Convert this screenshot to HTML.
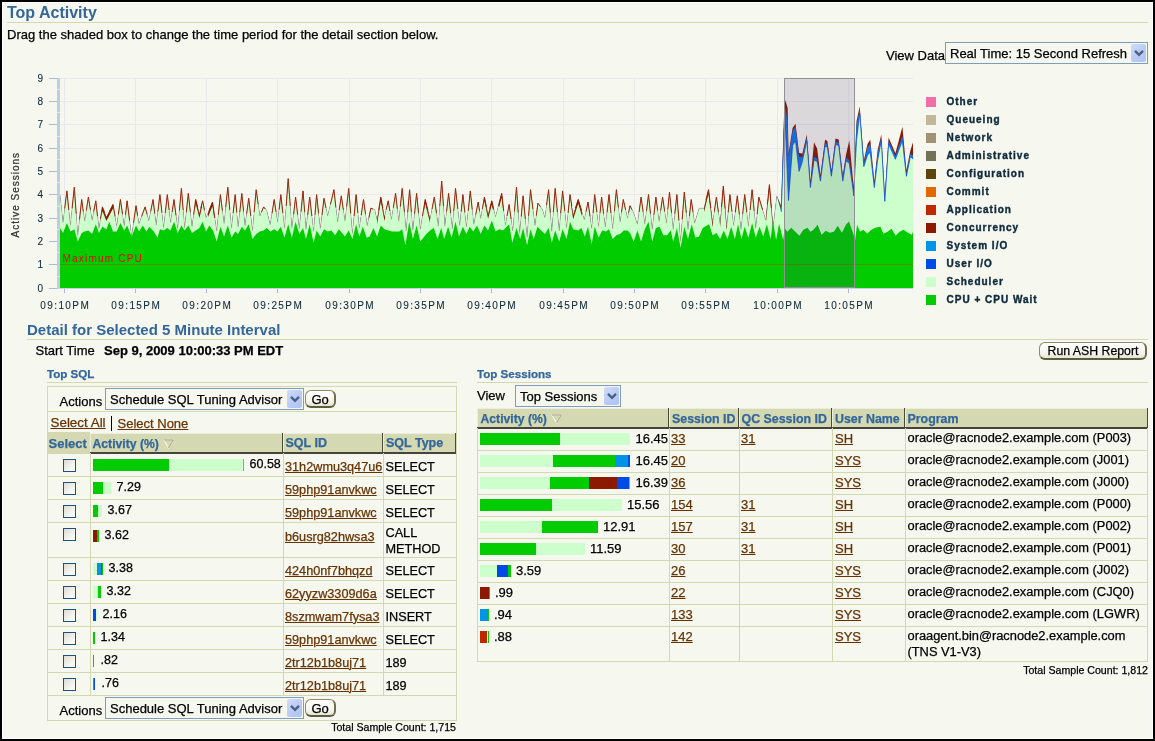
<!DOCTYPE html><html><head><meta charset="utf-8"><style>html,body{margin:0;padding:0;width:1155px;height:741px;overflow:hidden;background:#000}body{position:relative;font-family:"Liberation Sans",sans-serif;-webkit-font-smoothing:antialiased}div{-webkit-text-stroke:0.25px currentColor}div{box-sizing:content-box}a,u{color:#663300}</style></head><body>
<div style="position:absolute;left:0px;top:0px;width:1155px;height:741px;background:#000;"></div>
<div style="position:absolute;left:2px;top:2px;width:1151px;height:737px;background:#fff;"></div>
<div style="position:absolute;left:3px;top:3px;width:1149px;height:735px;background:#f6f7ef;"></div>
<div style="position:absolute;left:0;top:0;width:1155px;height:741px;will-change:transform">
<div style="position:absolute;left:7px;top:5.46px;font-size:16px;line-height:16px;font-weight:700;color:#336699;white-space:nowrap;-webkit-text-stroke:0;">Top Activity</div>
<div style="position:absolute;left:7px;top:22px;width:1141px;height:1px;background:#d2d9b1;"></div>
<div style="position:absolute;left:7px;top:28.00px;font-size:13px;line-height:13px;font-weight:400;color:#000;white-space:nowrap;">Drag the shaded box to change the time period for the detail section below.</div>
<div style="position:absolute;left:886px;top:49.00px;font-size:13px;line-height:13px;font-weight:400;color:#000;white-space:nowrap;">View Data</div>
<div style="position:absolute;left:945px;top:42px;width:201px;height:20px;border:1px solid #7f9db9;background:#f6f7ef"></div>
<div style="position:absolute;left:1131px;top:44px;width:15px;height:18px;border-radius:2px;background:linear-gradient(135deg,#d0dcf9 0%,#b7c9f6 60%,#aec4f6 100%)"></div>
<svg style="position:absolute;left:1133.5px;top:49.0px" width="10" height="8" viewBox="0 0 10 8"><path d="M1 1.8 L5 5.8 L9 1.8" fill="none" stroke="#4d6185" stroke-width="2.4"/></svg>
<div style="position:absolute;left:950px;top:47.00px;font-size:13px;line-height:13px;font-weight:400;color:#000;white-space:nowrap;">Real Time: 15 Second Refresh</div>
<svg style="position:absolute;left:0;top:0" width="1155" height="741" viewBox="0 0 1155 741"><line x1="60" y1="288.5" x2="913" y2="288.5" stroke="#e8eaea" stroke-width="1"/><line x1="49" y1="288.5" x2="57" y2="288.5" stroke="#a8bcd4" stroke-width="1"/><line x1="60" y1="264.5" x2="913" y2="264.5" stroke="#e8eaea" stroke-width="1"/><line x1="49" y1="264.5" x2="57" y2="264.5" stroke="#a8bcd4" stroke-width="1"/><line x1="60" y1="241.5" x2="913" y2="241.5" stroke="#e8eaea" stroke-width="1"/><line x1="49" y1="241.5" x2="57" y2="241.5" stroke="#a8bcd4" stroke-width="1"/><line x1="60" y1="218.5" x2="913" y2="218.5" stroke="#e8eaea" stroke-width="1"/><line x1="49" y1="218.5" x2="57" y2="218.5" stroke="#a8bcd4" stroke-width="1"/><line x1="60" y1="194.5" x2="913" y2="194.5" stroke="#e8eaea" stroke-width="1"/><line x1="49" y1="194.5" x2="57" y2="194.5" stroke="#a8bcd4" stroke-width="1"/><line x1="60" y1="171.5" x2="913" y2="171.5" stroke="#e8eaea" stroke-width="1"/><line x1="49" y1="171.5" x2="57" y2="171.5" stroke="#a8bcd4" stroke-width="1"/><line x1="60" y1="148.5" x2="913" y2="148.5" stroke="#e8eaea" stroke-width="1"/><line x1="49" y1="148.5" x2="57" y2="148.5" stroke="#a8bcd4" stroke-width="1"/><line x1="60" y1="124.5" x2="913" y2="124.5" stroke="#e8eaea" stroke-width="1"/><line x1="49" y1="124.5" x2="57" y2="124.5" stroke="#a8bcd4" stroke-width="1"/><line x1="60" y1="101.5" x2="913" y2="101.5" stroke="#e8eaea" stroke-width="1"/><line x1="49" y1="101.5" x2="57" y2="101.5" stroke="#a8bcd4" stroke-width="1"/><line x1="60" y1="78.5" x2="913" y2="78.5" stroke="#e8eaea" stroke-width="1"/><line x1="49" y1="78.5" x2="57" y2="78.5" stroke="#a8bcd4" stroke-width="1"/><line x1="64.5" y1="78" x2="64.5" y2="288" stroke="#e8eaea" stroke-width="1"/><line x1="64.5" y1="289" x2="64.5" y2="293" stroke="#a8bcd4" stroke-width="1"/><line x1="135.5" y1="78" x2="135.5" y2="288" stroke="#e8eaea" stroke-width="1"/><line x1="135.5" y1="289" x2="135.5" y2="293" stroke="#a8bcd4" stroke-width="1"/><line x1="206.5" y1="78" x2="206.5" y2="288" stroke="#e8eaea" stroke-width="1"/><line x1="206.5" y1="289" x2="206.5" y2="293" stroke="#a8bcd4" stroke-width="1"/><line x1="277.5" y1="78" x2="277.5" y2="288" stroke="#e8eaea" stroke-width="1"/><line x1="277.5" y1="289" x2="277.5" y2="293" stroke="#a8bcd4" stroke-width="1"/><line x1="349.5" y1="78" x2="349.5" y2="288" stroke="#e8eaea" stroke-width="1"/><line x1="349.5" y1="289" x2="349.5" y2="293" stroke="#a8bcd4" stroke-width="1"/><line x1="420.5" y1="78" x2="420.5" y2="288" stroke="#e8eaea" stroke-width="1"/><line x1="420.5" y1="289" x2="420.5" y2="293" stroke="#a8bcd4" stroke-width="1"/><line x1="491.5" y1="78" x2="491.5" y2="288" stroke="#e8eaea" stroke-width="1"/><line x1="491.5" y1="289" x2="491.5" y2="293" stroke="#a8bcd4" stroke-width="1"/><line x1="563.5" y1="78" x2="563.5" y2="288" stroke="#e8eaea" stroke-width="1"/><line x1="563.5" y1="289" x2="563.5" y2="293" stroke="#a8bcd4" stroke-width="1"/><line x1="634.5" y1="78" x2="634.5" y2="288" stroke="#e8eaea" stroke-width="1"/><line x1="634.5" y1="289" x2="634.5" y2="293" stroke="#a8bcd4" stroke-width="1"/><line x1="705.5" y1="78" x2="705.5" y2="288" stroke="#e8eaea" stroke-width="1"/><line x1="705.5" y1="289" x2="705.5" y2="293" stroke="#a8bcd4" stroke-width="1"/><line x1="777.5" y1="78" x2="777.5" y2="288" stroke="#e8eaea" stroke-width="1"/><line x1="777.5" y1="289" x2="777.5" y2="293" stroke="#a8bcd4" stroke-width="1"/><line x1="848.5" y1="78" x2="848.5" y2="288" stroke="#e8eaea" stroke-width="1"/><line x1="848.5" y1="289" x2="848.5" y2="293" stroke="#a8bcd4" stroke-width="1"/><polygon points="60,288 60.0,194.6 63.0,222.5 66.9,190.9 70.4,225.6 74.3,187.2 77.8,235.4 81.7,199.5 84.7,221.3 88.4,197.1 92.1,220.3 95.8,200.8 99.0,228.5 102.4,206.9 106.4,217.1 113.0,204.5 116.7,226.4 120.4,199.5 124.2,226.1 127.1,200.8 131.6,236.6 136.0,205.7 139.0,223.8 145.1,206.9 148.8,220.9 153.0,199.5 156.2,225.1 159.9,194.6 163.6,227.8 167.3,194.6 170.5,222.6 174.0,199.5 177.7,228.5 181.4,188.4 184.6,227.8 188.3,193.4 192.0,226.8 195.7,199.5 199.4,214.1 202.6,200.8 206.1,217.8 212.5,202.0 216.7,231.1 220.4,194.6 224.1,223.6 227.8,187.2 231.5,228.3 235.2,194.6 238.1,227.2 241.8,193.4 245.0,226.1 248.7,198.3 252.5,230.4 256.2,189.7 259.9,216.1 263.6,206.9 266.8,210.6 270.2,224.7 274.2,199.5 277.6,222.1 280.8,194.6 284.5,228.3 288.2,178.6 291.9,228.3 295.6,197.1 299.3,228.9 303.0,190.9 306.0,229.5 309.7,197.1 313.6,231.5 316.6,194.6 320.3,228.8 324.0,198.3 327.7,216.1 333.9,189.7 337.6,222.0 341.3,195.8 345.0,221.0 348.7,188.4 352.4,233.8 356.1,194.6 359.3,227.9 363.5,199.5 367.2,225.6 370.9,208.2 374.6,209.4 377.1,220.1 380.8,197.1 384.5,217.1 388.2,200.8 391.4,219.5 395.6,193.4 398.8,221.3 402.2,188.4 406.2,230.8 409.6,189.7 412.9,230.4 416.6,193.4 420.3,229.4 425.2,199.5 430.1,219.2 434.3,197.1 438.3,226.3 441.7,181.0 444.9,226.2 448.6,193.4 452.3,229.1 455.5,188.4 459.7,225.6 462.9,194.6 466.4,227.2 470.3,190.9 473.8,224.5 478.2,202.0 480.7,218.5 484.4,197.1 488.1,214.8 491.8,200.8 495.5,216.9 501.7,193.4 505.4,225.3 509.1,204.5 512.8,231.0 516.5,187.2 519.7,233.4 523.1,195.8 527.1,237.4 530.5,189.7 535.0,225.7 537.9,203.2 542.4,209.4 544.9,217.7 548.6,189.7 551.8,231.5 555.2,188.4 559.2,231.1 562.6,190.9 566.6,227.8 570.0,194.6 573.2,215.3 578.2,199.5 584.3,219.8 588.0,202.0 591.7,228.4 594.7,194.6 598.6,226.6 601.6,197.1 605.3,227.2 609.0,194.6 612.7,228.7 616.4,189.7 620.1,222.0 623.3,199.5 627.5,218.3 630.0,205.7 633.7,213.1 637.4,224.3 641.1,197.1 644.8,224.0 648.5,194.6 652.2,229.4 655.9,197.1 659.1,221.6 662.6,197.1 666.5,223.2 669.5,192.1 673.2,229.4 676.9,194.6 680.6,241.6 684.3,192.1 688.0,229.5 691.2,199.5 694.6,223.2 699.1,208.2 704.0,208.2 708.5,189.7 712.7,223.2 716.4,197.1 720.1,224.3 723.3,186.0 726.7,227.3 729.9,194.6 733.6,225.7 737.3,195.8 741.0,229.7 744.7,194.6 748.4,226.6 752.1,189.7 755.8,228.3 758.8,197.1 765.7,220.3 769.4,184.7 773.1,227.2 776.8,195.8 781.2,205.8 784.2,109.8 785.3,100.1 787.7,108.2 788.5,153.8 792.6,127.9 795.5,123.8 799.1,152.7 802.3,153.8 806.8,134.6 810.4,181.5 814.0,142.2 817.2,148.7 820.4,175.1 825.0,139.8 827.4,141.1 831.4,170.2 835.5,138.6 838.7,139.4 842.8,175.1 846.0,154.8 849.3,140.6 853.8,188.8 853.6,189.7 856.5,121.2 859.7,106.6 863.8,160.6 867.5,143.9 870.3,139.8 874.3,181.6 877.6,150.3 881.3,134.6 884.8,195.4 888.6,137.4 895.4,153.3 902.4,126.8 906.4,170.3 910.3,150.8 913.0,142.2 913.0,145.5 913,288" fill="#8b1a00"/><polygon points="60,288 60.0,194.6 63.0,222.5 66.9,190.9 70.4,225.6 74.3,187.2 77.8,235.4 81.7,199.5 84.7,221.3 88.4,197.1 92.1,220.3 95.8,200.8 99.0,228.5 102.4,206.9 106.4,217.1 113.0,204.5 116.7,226.4 120.4,199.5 124.2,226.1 127.1,200.8 131.6,236.6 136.0,205.7 139.0,223.8 145.1,206.9 148.8,220.9 153.0,199.5 156.2,225.1 159.9,194.6 163.6,227.8 167.3,194.6 170.5,222.6 174.0,199.5 177.7,228.5 181.4,188.4 184.6,227.8 188.3,193.4 192.0,226.8 195.7,199.5 199.4,214.1 202.6,200.8 206.1,217.8 212.5,202.0 216.7,231.1 220.4,194.6 224.1,223.6 227.8,187.2 231.5,228.3 235.2,194.6 238.1,227.2 241.8,193.4 245.0,226.1 248.7,198.3 252.5,230.4 256.2,189.7 259.9,216.1 263.6,206.9 266.8,210.6 270.2,224.7 274.2,199.5 277.6,222.1 280.8,194.6 284.5,228.3 288.2,178.6 291.9,228.3 295.6,197.1 299.3,228.9 303.0,190.9 306.0,229.5 309.7,197.1 313.6,231.5 316.6,194.6 320.3,228.8 324.0,198.3 327.7,216.1 333.9,189.7 337.6,222.0 341.3,195.8 345.0,221.0 348.7,188.4 352.4,233.8 356.1,194.6 359.3,227.9 363.5,199.5 367.2,225.6 370.9,208.2 374.6,209.4 377.1,220.1 380.8,197.1 384.5,217.1 388.2,200.8 391.4,219.5 395.6,193.4 398.8,221.3 402.2,188.4 406.2,230.8 409.6,189.7 412.9,230.4 416.6,193.4 420.3,229.4 425.2,199.5 430.1,219.2 434.3,197.1 438.3,226.3 441.7,181.0 444.9,226.2 448.6,193.4 452.3,229.1 455.5,188.4 459.7,225.6 462.9,194.6 466.4,227.2 470.3,190.9 473.8,224.5 478.2,202.0 480.7,218.5 484.4,197.1 488.1,214.8 491.8,200.8 495.5,216.9 501.7,193.4 505.4,225.3 509.1,204.5 512.8,231.0 516.5,187.2 519.7,233.4 523.1,195.8 527.1,237.4 530.5,189.7 535.0,225.7 537.9,203.2 542.4,209.4 544.9,217.7 548.6,189.7 551.8,231.5 555.2,188.4 559.2,231.1 562.6,190.9 566.6,227.8 570.0,194.6 573.2,215.3 578.2,199.5 584.3,219.8 588.0,202.0 591.7,228.4 594.7,194.6 598.6,226.6 601.6,197.1 605.3,227.2 609.0,194.6 612.7,228.7 616.4,189.7 620.1,222.0 623.3,199.5 627.5,218.3 630.0,205.7 633.7,213.1 637.4,224.3 641.1,197.1 644.8,224.0 648.5,194.6 652.2,229.4 655.9,197.1 659.1,221.6 662.6,197.1 666.5,223.2 669.5,192.1 673.2,229.4 676.9,194.6 680.6,241.6 684.3,192.1 688.0,229.5 691.2,199.5 694.6,223.2 699.1,208.2 704.0,208.2 708.5,189.7 712.7,223.2 716.4,197.1 720.1,224.3 723.3,186.0 726.7,227.3 729.9,194.6 733.6,225.7 737.3,195.8 741.0,229.7 744.7,194.6 748.4,226.6 752.1,189.7 755.8,228.3 758.8,197.1 765.7,220.3 769.4,184.7 773.1,227.2 776.8,195.8 781.2,208.8 784.2,113.1 785.3,108.2 787.7,121.1 788.5,156.8 792.6,130.9 795.5,126.8 799.1,156.8 802.3,156.8 806.8,137.6 810.4,184.5 814.0,157.0 817.2,158.6 820.4,178.1 825.0,143.3 827.4,144.1 831.4,173.2 835.5,141.6 838.7,142.4 842.8,178.1 846.0,157.8 849.3,160.0 853.8,191.8 853.6,192.7 856.5,124.4 859.7,109.8 863.8,163.6 867.5,147.1 870.3,143.9 874.3,184.6 877.6,153.6 881.3,137.6 884.8,198.4 888.6,140.6 895.4,156.3 902.4,135.8 906.4,173.3 910.3,153.8 913.0,155.5 913.0,156.3 913,288" fill="#1478e6"/><polygon points="60,288 60.0,194.6 63.0,222.5 66.9,190.9 70.4,225.6 74.3,187.2 77.8,235.4 81.7,199.5 84.7,221.3 88.4,197.1 92.1,220.3 95.8,200.8 99.0,228.5 102.4,206.9 106.4,217.1 113.0,204.5 116.7,226.4 120.4,199.5 124.2,226.1 127.1,200.8 131.6,236.6 136.0,205.7 139.0,223.8 145.1,206.9 148.8,220.9 153.0,199.5 156.2,225.1 159.9,194.6 163.6,227.8 167.3,194.6 170.5,222.6 174.0,199.5 177.7,228.5 181.4,188.4 184.6,227.8 188.3,193.4 192.0,226.8 195.7,199.5 199.4,214.1 202.6,200.8 206.1,217.8 212.5,202.0 216.7,231.1 220.4,194.6 224.1,223.6 227.8,187.2 231.5,228.3 235.2,194.6 238.1,227.2 241.8,193.4 245.0,226.1 248.7,198.3 252.5,230.4 256.2,189.7 259.9,216.1 263.6,206.9 266.8,210.6 270.2,224.7 274.2,199.5 277.6,222.1 280.8,194.6 284.5,228.3 288.2,178.6 291.9,228.3 295.6,197.1 299.3,228.9 303.0,190.9 306.0,229.5 309.7,197.1 313.6,231.5 316.6,194.6 320.3,228.8 324.0,198.3 327.7,216.1 333.9,189.7 337.6,222.0 341.3,195.8 345.0,221.0 348.7,188.4 352.4,233.8 356.1,194.6 359.3,227.9 363.5,199.5 367.2,225.6 370.9,208.2 374.6,209.4 377.1,220.1 380.8,197.1 384.5,217.1 388.2,200.8 391.4,219.5 395.6,193.4 398.8,221.3 402.2,188.4 406.2,230.8 409.6,189.7 412.9,230.4 416.6,193.4 420.3,229.4 425.2,199.5 430.1,219.2 434.3,197.1 438.3,226.3 441.7,181.0 444.9,226.2 448.6,193.4 452.3,229.1 455.5,188.4 459.7,225.6 462.9,194.6 466.4,227.2 470.3,190.9 473.8,224.5 478.2,202.0 480.7,218.5 484.4,197.1 488.1,214.8 491.8,200.8 495.5,216.9 501.7,193.4 505.4,225.3 509.1,204.5 512.8,231.0 516.5,187.2 519.7,233.4 523.1,195.8 527.1,237.4 530.5,189.7 535.0,225.7 537.9,203.2 542.4,209.4 544.9,217.7 548.6,189.7 551.8,231.5 555.2,188.4 559.2,231.1 562.6,190.9 566.6,227.8 570.0,194.6 573.2,215.3 578.2,199.5 584.3,219.8 588.0,202.0 591.7,228.4 594.7,194.6 598.6,226.6 601.6,197.1 605.3,227.2 609.0,194.6 612.7,228.7 616.4,189.7 620.1,222.0 623.3,199.5 627.5,218.3 630.0,205.7 633.7,213.1 637.4,224.3 641.1,197.1 644.8,224.0 648.5,194.6 652.2,229.4 655.9,197.1 659.1,221.6 662.6,197.1 666.5,223.2 669.5,192.1 673.2,229.4 676.9,194.6 680.6,241.6 684.3,192.1 688.0,229.5 691.2,199.5 694.6,223.2 699.1,208.2 704.0,208.2 708.5,189.7 712.7,223.2 716.4,197.1 720.1,224.3 723.3,186.0 726.7,227.3 729.9,194.6 733.6,225.7 737.3,195.8 741.0,229.7 744.7,194.6 748.4,226.6 752.1,189.7 755.8,228.3 758.8,197.1 765.7,220.3 769.4,184.7 773.1,227.2 776.8,195.8 781.2,211.8 784.2,129.2 785.3,124.4 787.7,182.7 788.5,200.5 792.6,145.4 795.5,140.6 799.1,171.4 802.3,161.6 806.8,140.6 810.4,187.5 814.0,160.0 817.2,161.6 820.4,181.1 825.0,146.3 827.4,147.1 831.4,176.2 835.5,144.6 838.7,145.4 842.8,181.1 846.0,160.8 849.3,163.3 853.8,194.8 853.6,195.7 856.5,140.6 859.7,113.1 863.8,166.6 867.5,155.2 870.3,152.0 874.3,187.6 877.6,160.1 881.3,140.6 884.8,201.4 888.6,143.9 895.4,159.3 902.4,140.6 906.4,176.3 910.3,156.8 913.0,158.5 913.0,159.3 913,288" fill="#ccffcc"/><polyline points="781.2,211.8 784.2,129.2 785.3,124.4 787.7,182.7 788.5,200.5 792.6,145.4 795.5,140.6 799.1,171.4 802.3,161.6 806.8,140.6 810.4,187.5 814.0,160.0 817.2,161.6 820.4,181.1 825.0,146.3 827.4,147.1 831.4,176.2 835.5,144.6 838.7,145.4 842.8,181.1 846.0,160.8 849.3,163.3 853.8,194.8 853.6,195.7 856.5,140.6 859.7,113.1 863.8,166.6 867.5,155.2 870.3,152.0 874.3,187.6 877.6,160.1 881.3,140.6 884.8,201.4 888.6,143.9 895.4,159.3 902.4,140.6 906.4,176.3 910.3,156.8 913.0,158.5 913.0,159.3" fill="none" stroke="rgba(10,70,225,0.8)" stroke-width="0.9" stroke-linejoin="miter"/><polyline points="60.0,194.6 63.0,222.5 66.9,190.9 70.4,225.6 74.3,187.2 77.8,235.4 81.7,199.5 84.7,221.3 88.4,197.1 92.1,220.3 95.8,200.8 99.0,228.5 102.4,206.9 106.4,217.1 113.0,204.5 116.7,226.4 120.4,199.5 124.2,226.1 127.1,200.8 131.6,236.6 136.0,205.7 139.0,223.8 145.1,206.9 148.8,220.9 153.0,199.5 156.2,225.1 159.9,194.6 163.6,227.8 167.3,194.6 170.5,222.6 174.0,199.5 177.7,228.5 181.4,188.4 184.6,227.8 188.3,193.4 192.0,226.8 195.7,199.5 199.4,214.1 202.6,200.8 206.1,217.8 212.5,202.0 216.7,231.1 220.4,194.6 224.1,223.6 227.8,187.2 231.5,228.3 235.2,194.6 238.1,227.2 241.8,193.4 245.0,226.1 248.7,198.3 252.5,230.4 256.2,189.7 259.9,216.1 263.6,206.9 266.8,210.6 270.2,224.7 274.2,199.5 277.6,222.1 280.8,194.6 284.5,228.3 288.2,178.6 291.9,228.3 295.6,197.1 299.3,228.9 303.0,190.9 306.0,229.5 309.7,197.1 313.6,231.5 316.6,194.6 320.3,228.8 324.0,198.3 327.7,216.1 333.9,189.7 337.6,222.0 341.3,195.8 345.0,221.0 348.7,188.4 352.4,233.8 356.1,194.6 359.3,227.9 363.5,199.5 367.2,225.6 370.9,208.2 374.6,209.4 377.1,220.1 380.8,197.1 384.5,217.1 388.2,200.8 391.4,219.5 395.6,193.4 398.8,221.3 402.2,188.4 406.2,230.8 409.6,189.7 412.9,230.4 416.6,193.4 420.3,229.4 425.2,199.5 430.1,219.2 434.3,197.1 438.3,226.3 441.7,181.0 444.9,226.2 448.6,193.4 452.3,229.1 455.5,188.4 459.7,225.6 462.9,194.6 466.4,227.2 470.3,190.9 473.8,224.5 478.2,202.0 480.7,218.5 484.4,197.1 488.1,214.8 491.8,200.8 495.5,216.9 501.7,193.4 505.4,225.3 509.1,204.5 512.8,231.0 516.5,187.2 519.7,233.4 523.1,195.8 527.1,237.4 530.5,189.7 535.0,225.7 537.9,203.2 542.4,209.4 544.9,217.7 548.6,189.7 551.8,231.5 555.2,188.4 559.2,231.1 562.6,190.9 566.6,227.8 570.0,194.6 573.2,215.3 578.2,199.5 584.3,219.8 588.0,202.0 591.7,228.4 594.7,194.6 598.6,226.6 601.6,197.1 605.3,227.2 609.0,194.6 612.7,228.7 616.4,189.7 620.1,222.0 623.3,199.5 627.5,218.3 630.0,205.7 633.7,213.1 637.4,224.3 641.1,197.1 644.8,224.0 648.5,194.6 652.2,229.4 655.9,197.1 659.1,221.6 662.6,197.1 666.5,223.2 669.5,192.1 673.2,229.4 676.9,194.6 680.6,241.6 684.3,192.1 688.0,229.5 691.2,199.5 694.6,223.2 699.1,208.2 704.0,208.2 708.5,189.7 712.7,223.2 716.4,197.1 720.1,224.3 723.3,186.0 726.7,227.3 729.9,194.6 733.6,225.7 737.3,195.8 741.0,229.7 744.7,194.6 748.4,226.6 752.1,189.7 755.8,228.3 758.8,197.1 765.7,220.3 769.4,184.7 773.1,227.2 776.8,195.8" fill="none" stroke="rgba(170,60,40,0.35)" stroke-width="0.6" stroke-linejoin="miter"/><polyline points="64.7,208.3 66.9,190.9 68.8,210.0" fill="none" stroke="#9a2a0e" stroke-width="1.0" stroke-linejoin="miter"/><polyline points="72.1,208.3 74.3,187.2 76.2,213.7" fill="none" stroke="#9a2a0e" stroke-width="1.0" stroke-linejoin="miter"/><polyline points="79.5,219.3 81.7,199.5 83.3,211.5" fill="none" stroke="#9a2a0e" stroke-width="1.0" stroke-linejoin="miter"/><polyline points="86.3,210.4 88.4,197.1 90.4,209.8" fill="none" stroke="#9a2a0e" stroke-width="1.0" stroke-linejoin="miter"/><polyline points="93.7,211.5 95.8,200.8 97.5,216.0" fill="none" stroke="#9a2a0e" stroke-width="1.0" stroke-linejoin="miter"/><polyline points="100.5,218.8 102.4,206.9 104.6,212.5" fill="none" stroke="#9a2a0e" stroke-width="1.0" stroke-linejoin="miter"/><polyline points="109.4,211.4 113.0,204.5 115.1,216.6" fill="none" stroke="#9a2a0e" stroke-width="1.0" stroke-linejoin="miter"/><polyline points="118.4,214.3 120.4,199.5 122.5,214.1" fill="none" stroke="#9a2a0e" stroke-width="1.0" stroke-linejoin="miter"/><polyline points="125.5,214.7 127.1,200.8 129.6,220.5" fill="none" stroke="#9a2a0e" stroke-width="1.0" stroke-linejoin="miter"/><polyline points="133.6,222.7 136.0,205.7 137.6,215.7" fill="none" stroke="#9a2a0e" stroke-width="1.0" stroke-linejoin="miter"/><polyline points="141.7,216.2 145.1,206.9 147.2,214.6" fill="none" stroke="#9a2a0e" stroke-width="1.0" stroke-linejoin="miter"/><polyline points="150.7,211.3 153.0,199.5 154.8,213.6" fill="none" stroke="#9a2a0e" stroke-width="1.0" stroke-linejoin="miter"/><polyline points="157.9,211.4 159.9,194.6 162.0,212.9" fill="none" stroke="#9a2a0e" stroke-width="1.0" stroke-linejoin="miter"/><polyline points="165.3,212.9 167.3,194.6 169.1,210.0" fill="none" stroke="#9a2a0e" stroke-width="1.0" stroke-linejoin="miter"/><polyline points="172.1,212.2 174.0,199.5 176.0,215.5" fill="none" stroke="#9a2a0e" stroke-width="1.0" stroke-linejoin="miter"/><polyline points="179.4,210.5 181.4,188.4 183.2,210.1" fill="none" stroke="#9a2a0e" stroke-width="1.0" stroke-linejoin="miter"/><polyline points="186.3,212.3 188.3,193.4 190.3,211.8" fill="none" stroke="#9a2a0e" stroke-width="1.0" stroke-linejoin="miter"/><polyline points="193.7,214.5 195.7,199.5 197.7,207.5" fill="none" stroke="#9a2a0e" stroke-width="1.0" stroke-linejoin="miter"/><polyline points="200.8,208.1 202.6,200.8 204.5,210.1" fill="none" stroke="#9a2a0e" stroke-width="1.0" stroke-linejoin="miter"/><polyline points="209.0,210.7 212.5,202.0 214.8,218.0" fill="none" stroke="#9a2a0e" stroke-width="1.0" stroke-linejoin="miter"/><polyline points="218.3,214.7 220.4,194.6 222.4,210.6" fill="none" stroke="#9a2a0e" stroke-width="1.0" stroke-linejoin="miter"/><polyline points="225.7,207.2 227.8,187.2 229.8,209.8" fill="none" stroke="#9a2a0e" stroke-width="1.0" stroke-linejoin="miter"/><polyline points="233.1,213.1 235.2,194.6 236.8,212.5" fill="none" stroke="#9a2a0e" stroke-width="1.0" stroke-linejoin="miter"/><polyline points="239.8,212.0 241.8,193.4 243.6,211.4" fill="none" stroke="#9a2a0e" stroke-width="1.0" stroke-linejoin="miter"/><polyline points="246.7,213.6 248.7,198.3 250.8,215.9" fill="none" stroke="#9a2a0e" stroke-width="1.0" stroke-linejoin="miter"/><polyline points="254.1,212.1 256.2,189.7 258.2,204.2" fill="none" stroke="#9a2a0e" stroke-width="1.0" stroke-linejoin="miter"/><polyline points="261.5,212.0 263.6,206.9 265.3,209.0" fill="none" stroke="#9a2a0e" stroke-width="1.0" stroke-linejoin="miter"/><polyline points="272.0,213.4 274.2,199.5 276.1,212.0" fill="none" stroke="#9a2a0e" stroke-width="1.0" stroke-linejoin="miter"/><polyline points="279.1,209.7 280.8,194.6 282.9,213.1" fill="none" stroke="#9a2a0e" stroke-width="1.0" stroke-linejoin="miter"/><polyline points="286.2,205.9 288.2,178.6 290.3,205.9" fill="none" stroke="#9a2a0e" stroke-width="1.0" stroke-linejoin="miter"/><polyline points="293.6,214.2 295.6,197.1 297.7,214.6" fill="none" stroke="#9a2a0e" stroke-width="1.0" stroke-linejoin="miter"/><polyline points="301.0,211.8 303.0,190.9 304.7,212.1" fill="none" stroke="#9a2a0e" stroke-width="1.0" stroke-linejoin="miter"/><polyline points="307.7,214.9 309.7,197.1 311.9,216.0" fill="none" stroke="#9a2a0e" stroke-width="1.0" stroke-linejoin="miter"/><polyline points="315.0,214.9 316.6,194.6 318.6,213.4" fill="none" stroke="#9a2a0e" stroke-width="1.0" stroke-linejoin="miter"/><polyline points="322.0,215.1 324.0,198.3 326.0,208.1" fill="none" stroke="#9a2a0e" stroke-width="1.0" stroke-linejoin="miter"/><polyline points="330.5,204.2 333.9,189.7 335.9,207.5" fill="none" stroke="#9a2a0e" stroke-width="1.0" stroke-linejoin="miter"/><polyline points="339.2,210.2 341.3,195.8 343.3,209.7" fill="none" stroke="#9a2a0e" stroke-width="1.0" stroke-linejoin="miter"/><polyline points="346.7,206.4 348.7,188.4 350.7,213.4" fill="none" stroke="#9a2a0e" stroke-width="1.0" stroke-linejoin="miter"/><polyline points="354.1,216.2 356.1,194.6 357.9,212.9" fill="none" stroke="#9a2a0e" stroke-width="1.0" stroke-linejoin="miter"/><polyline points="361.2,215.1 363.5,199.5 365.5,213.9" fill="none" stroke="#9a2a0e" stroke-width="1.0" stroke-linejoin="miter"/><polyline points="368.9,217.8 370.9,208.2 372.9,208.9" fill="none" stroke="#9a2a0e" stroke-width="1.0" stroke-linejoin="miter"/><polyline points="378.7,209.8 380.8,197.1 382.8,208.1" fill="none" stroke="#9a2a0e" stroke-width="1.0" stroke-linejoin="miter"/><polyline points="386.1,209.7 388.2,200.8 389.9,211.1" fill="none" stroke="#9a2a0e" stroke-width="1.0" stroke-linejoin="miter"/><polyline points="393.3,207.7 395.6,193.4 397.3,208.7" fill="none" stroke="#9a2a0e" stroke-width="1.0" stroke-linejoin="miter"/><polyline points="400.3,206.5 402.2,188.4 404.4,211.8" fill="none" stroke="#9a2a0e" stroke-width="1.0" stroke-linejoin="miter"/><polyline points="407.7,212.3 409.6,189.7 411.4,212.1" fill="none" stroke="#9a2a0e" stroke-width="1.0" stroke-linejoin="miter"/><polyline points="414.5,213.7 416.6,193.4 418.6,213.2" fill="none" stroke="#9a2a0e" stroke-width="1.0" stroke-linejoin="miter"/><polyline points="422.5,216.0 425.2,199.5 427.9,210.3" fill="none" stroke="#9a2a0e" stroke-width="1.0" stroke-linejoin="miter"/><polyline points="432.0,209.2 434.3,197.1 436.5,213.1" fill="none" stroke="#9a2a0e" stroke-width="1.0" stroke-linejoin="miter"/><polyline points="439.8,205.9 441.7,181.0 443.5,205.9" fill="none" stroke="#9a2a0e" stroke-width="1.0" stroke-linejoin="miter"/><polyline points="446.6,211.4 448.6,193.4 450.7,213.0" fill="none" stroke="#9a2a0e" stroke-width="1.0" stroke-linejoin="miter"/><polyline points="453.8,210.8 455.5,188.4 457.8,208.9" fill="none" stroke="#9a2a0e" stroke-width="1.0" stroke-linejoin="miter"/><polyline points="461.2,211.7 462.9,194.6 464.8,212.5" fill="none" stroke="#9a2a0e" stroke-width="1.0" stroke-linejoin="miter"/><polyline points="468.2,210.9 470.3,190.9 472.2,209.4" fill="none" stroke="#9a2a0e" stroke-width="1.0" stroke-linejoin="miter"/><polyline points="475.8,214.4 478.2,202.0 479.6,211.1" fill="none" stroke="#9a2a0e" stroke-width="1.0" stroke-linejoin="miter"/><polyline points="482.4,208.9 484.4,197.1 486.4,206.8" fill="none" stroke="#9a2a0e" stroke-width="1.0" stroke-linejoin="miter"/><polyline points="489.8,208.5 491.8,200.8 493.8,209.7" fill="none" stroke="#9a2a0e" stroke-width="1.0" stroke-linejoin="miter"/><polyline points="498.3,206.3 501.7,193.4 503.7,210.9" fill="none" stroke="#9a2a0e" stroke-width="1.0" stroke-linejoin="miter"/><polyline points="507.0,215.9 509.1,204.5 511.1,219.0" fill="none" stroke="#9a2a0e" stroke-width="1.0" stroke-linejoin="miter"/><polyline points="514.4,211.3 516.5,187.2 518.2,212.6" fill="none" stroke="#9a2a0e" stroke-width="1.0" stroke-linejoin="miter"/><polyline points="521.2,216.5 523.1,195.8 525.3,218.7" fill="none" stroke="#9a2a0e" stroke-width="1.0" stroke-linejoin="miter"/><polyline points="528.6,215.9 530.5,189.7 533.0,209.5" fill="none" stroke="#9a2a0e" stroke-width="1.0" stroke-linejoin="miter"/><polyline points="536.3,215.6 537.9,203.2 540.4,206.6" fill="none" stroke="#9a2a0e" stroke-width="1.0" stroke-linejoin="miter"/><polyline points="546.5,205.1 548.6,189.7 550.3,212.7" fill="none" stroke="#9a2a0e" stroke-width="1.0" stroke-linejoin="miter"/><polyline points="553.3,212.1 555.2,188.4 557.4,211.9" fill="none" stroke="#9a2a0e" stroke-width="1.0" stroke-linejoin="miter"/><polyline points="560.7,213.0 562.6,190.9 564.8,211.2" fill="none" stroke="#9a2a0e" stroke-width="1.0" stroke-linejoin="miter"/><polyline points="568.1,212.9 570.0,194.6 571.8,206.0" fill="none" stroke="#9a2a0e" stroke-width="1.0" stroke-linejoin="miter"/><polyline points="575.4,208.2 578.2,199.5 581.6,210.7" fill="none" stroke="#9a2a0e" stroke-width="1.0" stroke-linejoin="miter"/><polyline points="586.0,211.8 588.0,202.0 590.1,216.5" fill="none" stroke="#9a2a0e" stroke-width="1.0" stroke-linejoin="miter"/><polyline points="593.1,213.2 594.7,194.6 596.9,212.2" fill="none" stroke="#9a2a0e" stroke-width="1.0" stroke-linejoin="miter"/><polyline points="600.0,213.3 601.6,197.1 603.6,213.7" fill="none" stroke="#9a2a0e" stroke-width="1.0" stroke-linejoin="miter"/><polyline points="607.0,212.6 609.0,194.6 611.0,213.3" fill="none" stroke="#9a2a0e" stroke-width="1.0" stroke-linejoin="miter"/><polyline points="614.4,211.1 616.4,189.7 618.4,207.5" fill="none" stroke="#9a2a0e" stroke-width="1.0" stroke-linejoin="miter"/><polyline points="621.5,211.9 623.3,199.5 625.6,209.9" fill="none" stroke="#9a2a0e" stroke-width="1.0" stroke-linejoin="miter"/><polyline points="628.6,212.6 630.0,205.7 632.0,209.8" fill="none" stroke="#9a2a0e" stroke-width="1.0" stroke-linejoin="miter"/><polyline points="639.1,212.1 641.1,197.1 643.1,211.9" fill="none" stroke="#9a2a0e" stroke-width="1.0" stroke-linejoin="miter"/><polyline points="646.5,210.8 648.5,194.6 650.5,213.7" fill="none" stroke="#9a2a0e" stroke-width="1.0" stroke-linejoin="miter"/><polyline points="653.9,214.9 655.9,197.1 657.7,210.5" fill="none" stroke="#9a2a0e" stroke-width="1.0" stroke-linejoin="miter"/><polyline points="660.7,210.5 662.6,197.1 664.7,211.5" fill="none" stroke="#9a2a0e" stroke-width="1.0" stroke-linejoin="miter"/><polyline points="667.8,209.2 669.5,192.1 671.5,212.6" fill="none" stroke="#9a2a0e" stroke-width="1.0" stroke-linejoin="miter"/><polyline points="674.8,213.7 676.9,194.6 678.9,220.5" fill="none" stroke="#9a2a0e" stroke-width="1.0" stroke-linejoin="miter"/><polyline points="682.2,219.3 684.3,192.1 686.3,212.7" fill="none" stroke="#9a2a0e" stroke-width="1.0" stroke-linejoin="miter"/><polyline points="689.4,216.0 691.2,199.5 693.1,212.5" fill="none" stroke="#9a2a0e" stroke-width="1.0" stroke-linejoin="miter"/><polyline points="706.0,199.9 708.5,189.7 710.8,208.1" fill="none" stroke="#9a2a0e" stroke-width="1.0" stroke-linejoin="miter"/><polyline points="714.3,211.5 716.4,197.1 718.4,212.1" fill="none" stroke="#9a2a0e" stroke-width="1.0" stroke-linejoin="miter"/><polyline points="721.5,207.1 723.3,186.0 725.2,208.7" fill="none" stroke="#9a2a0e" stroke-width="1.0" stroke-linejoin="miter"/><polyline points="728.2,212.6 729.9,194.6 732.0,211.7" fill="none" stroke="#9a2a0e" stroke-width="1.0" stroke-linejoin="miter"/><polyline points="735.3,212.3 737.3,195.8 739.4,214.5" fill="none" stroke="#9a2a0e" stroke-width="1.0" stroke-linejoin="miter"/><polyline points="742.7,213.9 744.7,194.6 746.8,212.2" fill="none" stroke="#9a2a0e" stroke-width="1.0" stroke-linejoin="miter"/><polyline points="750.1,210.0 752.1,189.7 754.2,210.9" fill="none" stroke="#9a2a0e" stroke-width="1.0" stroke-linejoin="miter"/><polyline points="757.2,214.2 758.8,197.1 762.6,209.8" fill="none" stroke="#9a2a0e" stroke-width="1.0" stroke-linejoin="miter"/><polyline points="767.4,204.3 769.4,184.7 771.4,208.1" fill="none" stroke="#9a2a0e" stroke-width="1.0" stroke-linejoin="miter"/><polygon points="102.0,209.7 102.4,206.9 106.4,217.1 113.0,204.6 113.0,208.6 106.4,221.1 102.4,210.9 102.0,213.7" fill="#8b1a00"/><polygon points="195.0,204.7 195.7,199.5 199.4,214.1 202.0,203.3 202.0,207.3 199.4,218.1 195.7,203.5 195.0,208.7" fill="#8b1a00"/><polygon points="208.0,213.0 212.5,202.0 214.0,212.6 214.0,216.6 212.5,206.0 208.0,217.0" fill="#8b1a00"/><polygon points="377.0,219.8 377.1,220.1 380.8,197.1 384.5,217.1 385.0,214.8 385.0,218.8 384.5,221.1 380.8,201.1 377.1,224.1 377.0,223.8" fill="#8b1a00"/><polygon points="424.0,206.7 425.2,199.5 430.0,218.7 430.0,222.7 425.2,203.5 424.0,210.7" fill="#8b1a00"/><polygon points="484.0,199.4 484.4,197.1 488.1,214.8 491.8,200.8 493.0,206.0 493.0,210.0 491.8,204.8 488.1,218.8 484.4,201.1 484.0,203.4" fill="#8b1a00"/><polygon points="499.0,203.6 501.7,193.4 503.0,204.8 503.0,208.8 501.7,197.4 499.0,207.6" fill="#8b1a00"/><polygon points="571.0,200.9 573.2,215.3 578.2,199.5 582.0,212.1 582.0,216.1 578.2,203.5 573.2,219.3 571.0,204.9" fill="#8b1a00"/><polygon points="704.0,208.2 704.0,208.2 708.5,189.7 712.7,223.2 713.0,220.8 713.0,224.8 712.7,227.2 708.5,193.7 704.0,212.2 704.0,212.2" fill="#8b1a00"/><polygon points="720.0,223.9 720.1,224.3 723.3,186.0 726.7,227.3 727.0,224.4 727.0,227.4 726.7,230.3 723.3,189.0 720.1,227.3 720.0,226.9" fill="#8b1a00"/><polygon points="766.0,217.4 769.4,184.7 773.0,226.0 773.0,230.0 769.4,188.7 766.0,221.4" fill="#8b1a00"/><polygon points="60,288 60.0,227.9 63.0,232.9 66.9,223.0 70.4,231.6 74.3,229.2 77.8,241.5 81.7,232.9 84.7,231.6 88.4,230.4 92.1,234.1 95.8,224.2 99.0,232.9 102.4,226.7 106.4,229.2 109.3,221.7 113.0,231.6 116.7,231.6 120.4,223.0 124.2,230.4 127.1,225.4 131.6,236.6 136.0,225.4 139.0,231.6 142.7,225.4 146.4,231.6 149.3,226.7 153.8,231.6 157.5,237.8 159.9,229.2 163.6,230.4 167.3,227.9 170.5,230.4 174.0,221.7 177.7,232.9 181.4,225.4 184.6,230.4 188.3,225.4 192.0,232.9 195.7,230.4 199.4,227.9 202.6,221.7 206.1,231.6 209.3,225.4 213.0,230.4 216.7,241.5 220.4,226.7 224.1,236.6 227.8,225.4 231.5,237.8 235.2,231.6 238.1,234.1 241.8,226.7 245.0,230.4 248.7,224.2 252.5,239.0 256.2,234.1 259.9,231.6 263.6,230.4 266.8,227.9 270.2,231.6 274.2,229.2 277.6,231.6 280.8,226.7 284.5,237.8 288.2,224.2 291.9,237.8 295.6,221.7 299.3,234.1 303.0,227.9 306.0,239.0 309.7,224.2 313.6,242.7 316.6,230.4 320.3,236.6 324.0,229.2 327.7,231.6 331.4,230.4 335.1,235.3 338.8,229.2 345.0,236.6 348.7,230.4 352.4,239.0 356.1,224.2 359.3,236.6 362.8,226.7 366.7,237.8 369.7,236.6 373.4,227.9 377.1,236.6 380.8,225.4 384.5,229.2 388.2,230.4 391.9,231.6 399.3,231.6 402.2,229.2 405.4,245.2 409.2,221.7 412.9,239.0 416.6,225.4 420.3,241.5 426.4,234.1 430.1,230.4 433.8,227.9 437.5,239.0 441.2,227.9 444.2,239.0 448.1,226.7 451.6,237.8 455.5,221.7 459.0,236.6 462.9,226.7 466.4,234.1 469.6,226.7 473.3,231.6 477.0,225.4 480.7,234.1 484.4,225.4 488.1,230.4 491.8,220.5 495.5,231.6 499.2,229.2 502.9,230.4 509.1,224.2 512.3,242.7 516.5,227.9 520.2,239.0 523.1,227.9 527.1,245.2 530.5,229.2 533.7,239.0 537.5,226.7 541.2,230.4 544.9,234.1 548.6,227.9 551.8,242.7 555.2,230.4 559.2,241.5 562.6,229.2 566.6,239.0 570.0,221.7 573.2,229.2 578.2,230.4 581.4,227.9 584.8,236.6 588.0,226.7 591.7,244.0 594.7,226.7 598.6,237.8 602.1,230.4 606.0,231.6 609.0,229.2 612.7,239.0 616.4,235.3 620.1,234.1 623.8,230.4 627.5,230.4 630.0,232.9 633.7,241.5 637.4,230.4 641.1,241.5 644.8,229.2 648.5,221.7 652.2,241.5 655.9,227.9 659.6,226.7 663.3,235.3 667.0,235.3 670.7,230.4 673.2,241.5 676.9,227.9 680.6,247.7 684.3,226.7 688.0,239.0 691.7,224.2 695.4,237.8 699.1,236.6 702.8,227.9 709.0,224.2 712.7,235.3 716.4,232.9 720.1,239.0 723.8,230.4 727.5,239.0 731.2,226.7 734.9,239.0 738.1,224.2 741.5,239.0 744.7,226.7 748.4,237.8 752.1,223.0 755.8,237.8 759.5,226.7 763.2,236.6 766.9,224.2 770.6,239.0 773.0,221.6 776.1,239.9 779.1,223.7 783.2,239.9 784.6,227.7 787.2,231.8 791.3,227.7 795.3,231.8 799.4,235.8 803.4,229.7 807.5,227.7 810.5,231.8 813.5,229.7 817.6,224.7 821.6,234.8 825.7,230.7 829.7,232.8 833.8,231.8 837.8,225.7 841.9,232.8 845.9,224.7 849.0,221.6 853.0,232.8 855.1,239.9 857.1,224.7 860.1,231.8 863.2,229.7 867.2,233.8 871.3,229.7 875.3,227.7 880.4,226.7 883.4,233.8 887.5,231.8 891.5,228.7 895.6,235.8 899.6,231.8 903.7,229.7 907.7,232.8 911.8,234.8 913.0,231.8 913,288" fill="#00cc00"/><line x1="60" y1="264.5" x2="913" y2="264.5" stroke="rgba(255,10,10,0.32)" stroke-width="1"/><rect x="57" y="78" width="3" height="211" fill="#bfcde0"/><rect x="57" y="276" width="3" height="1" fill="#dfe6ee"/><rect x="57" y="252" width="3" height="1" fill="#dfe6ee"/><rect x="57" y="229" width="3" height="1" fill="#dfe6ee"/><rect x="57" y="206" width="3" height="1" fill="#dfe6ee"/><rect x="57" y="182" width="3" height="1" fill="#dfe6ee"/><rect x="57" y="159" width="3" height="1" fill="#dfe6ee"/><rect x="57" y="136" width="3" height="1" fill="#dfe6ee"/><rect x="57" y="112" width="3" height="1" fill="#dfe6ee"/><rect x="57" y="89" width="3" height="1" fill="#dfe6ee"/><line x1="57" y1="288.5" x2="913" y2="288.5" stroke="#c8d4e4" stroke-width="1"/><rect x="784.5" y="78.5" width="70" height="209" fill="rgba(60,40,100,0.15)" stroke="#929096" stroke-width="1"/></svg>
<div style="position:absolute;right:1112px;top:283.64px;font-size:10px;line-height:10px;font-weight:400;color:#0f2b3b;white-space:nowrap;-webkit-text-stroke:0.1px #0f2b3b;">0</div>
<div style="position:absolute;right:1112px;top:259.64px;font-size:10px;line-height:10px;font-weight:400;color:#0f2b3b;white-space:nowrap;-webkit-text-stroke:0.1px #0f2b3b;">1</div>
<div style="position:absolute;right:1112px;top:236.63px;font-size:10px;line-height:10px;font-weight:400;color:#0f2b3b;white-space:nowrap;-webkit-text-stroke:0.1px #0f2b3b;">2</div>
<div style="position:absolute;right:1112px;top:213.63px;font-size:10px;line-height:10px;font-weight:400;color:#0f2b3b;white-space:nowrap;-webkit-text-stroke:0.1px #0f2b3b;">3</div>
<div style="position:absolute;right:1112px;top:189.63px;font-size:10px;line-height:10px;font-weight:400;color:#0f2b3b;white-space:nowrap;-webkit-text-stroke:0.1px #0f2b3b;">4</div>
<div style="position:absolute;right:1112px;top:166.63px;font-size:10px;line-height:10px;font-weight:400;color:#0f2b3b;white-space:nowrap;-webkit-text-stroke:0.1px #0f2b3b;">5</div>
<div style="position:absolute;right:1112px;top:143.63px;font-size:10px;line-height:10px;font-weight:400;color:#0f2b3b;white-space:nowrap;-webkit-text-stroke:0.1px #0f2b3b;">6</div>
<div style="position:absolute;right:1112px;top:119.63px;font-size:10px;line-height:10px;font-weight:400;color:#0f2b3b;white-space:nowrap;-webkit-text-stroke:0.1px #0f2b3b;">7</div>
<div style="position:absolute;right:1112px;top:96.63px;font-size:10px;line-height:10px;font-weight:400;color:#0f2b3b;white-space:nowrap;-webkit-text-stroke:0.1px #0f2b3b;">8</div>
<div style="position:absolute;right:1112px;top:73.63px;font-size:10px;line-height:10px;font-weight:400;color:#0f2b3b;white-space:nowrap;-webkit-text-stroke:0.1px #0f2b3b;">9</div>
<div style="position:absolute;left:-234.8px;width:600px;text-align:center;top:300.54px;font-size:10px;line-height:10px;font-weight:400;color:#0f2b3b;letter-spacing:1.4px;white-space:nowrap;-webkit-text-stroke:0.1px #0f2b3b;">09:10PM</div>
<div style="position:absolute;left:-163.8px;width:600px;text-align:center;top:300.54px;font-size:10px;line-height:10px;font-weight:400;color:#0f2b3b;letter-spacing:1.4px;white-space:nowrap;-webkit-text-stroke:0.1px #0f2b3b;">09:15PM</div>
<div style="position:absolute;left:-92.80000000000001px;width:600px;text-align:center;top:300.54px;font-size:10px;line-height:10px;font-weight:400;color:#0f2b3b;letter-spacing:1.4px;white-space:nowrap;-webkit-text-stroke:0.1px #0f2b3b;">09:20PM</div>
<div style="position:absolute;left:-21.80000000000001px;width:600px;text-align:center;top:300.54px;font-size:10px;line-height:10px;font-weight:400;color:#0f2b3b;letter-spacing:1.4px;white-space:nowrap;-webkit-text-stroke:0.1px #0f2b3b;">09:25PM</div>
<div style="position:absolute;left:50.19999999999999px;width:600px;text-align:center;top:300.54px;font-size:10px;line-height:10px;font-weight:400;color:#0f2b3b;letter-spacing:1.4px;white-space:nowrap;-webkit-text-stroke:0.1px #0f2b3b;">09:30PM</div>
<div style="position:absolute;left:121.19999999999999px;width:600px;text-align:center;top:300.54px;font-size:10px;line-height:10px;font-weight:400;color:#0f2b3b;letter-spacing:1.4px;white-space:nowrap;-webkit-text-stroke:0.1px #0f2b3b;">09:35PM</div>
<div style="position:absolute;left:192.2px;width:600px;text-align:center;top:300.54px;font-size:10px;line-height:10px;font-weight:400;color:#0f2b3b;letter-spacing:1.4px;white-space:nowrap;-webkit-text-stroke:0.1px #0f2b3b;">09:40PM</div>
<div style="position:absolute;left:264.20000000000005px;width:600px;text-align:center;top:300.54px;font-size:10px;line-height:10px;font-weight:400;color:#0f2b3b;letter-spacing:1.4px;white-space:nowrap;-webkit-text-stroke:0.1px #0f2b3b;">09:45PM</div>
<div style="position:absolute;left:335.20000000000005px;width:600px;text-align:center;top:300.54px;font-size:10px;line-height:10px;font-weight:400;color:#0f2b3b;letter-spacing:1.4px;white-space:nowrap;-webkit-text-stroke:0.1px #0f2b3b;">09:50PM</div>
<div style="position:absolute;left:406.20000000000005px;width:600px;text-align:center;top:300.54px;font-size:10px;line-height:10px;font-weight:400;color:#0f2b3b;letter-spacing:1.4px;white-space:nowrap;-webkit-text-stroke:0.1px #0f2b3b;">09:55PM</div>
<div style="position:absolute;left:478.20000000000005px;width:600px;text-align:center;top:300.54px;font-size:10px;line-height:10px;font-weight:400;color:#0f2b3b;letter-spacing:1.4px;white-space:nowrap;-webkit-text-stroke:0.1px #0f2b3b;">10:00PM</div>
<div style="position:absolute;left:549.2px;width:600px;text-align:center;top:300.54px;font-size:10px;line-height:10px;font-weight:400;color:#0f2b3b;letter-spacing:1.4px;white-space:nowrap;-webkit-text-stroke:0.1px #0f2b3b;">10:05PM</div>
<div style="position:absolute;left:62.5px;top:253.53px;font-size:10px;line-height:10px;font-weight:400;color:#ee0000;letter-spacing:1.2px;white-space:nowrap;-webkit-text-stroke:0;">Maximum CPU</div>
<div style="position:absolute;left:-27px;top:189px;width:85px;height:12px;transform:rotate(-90deg);font-size:10px;line-height:12px;color:#333;letter-spacing:1px;text-align:center;white-space:nowrap">Active Sessions</div>
<div style="position:absolute;left:926px;top:97px;width:10px;height:10px;background:#f06eaa;"></div>
<div style="position:absolute;left:946.5px;top:97.03px;font-size:10px;line-height:10px;font-weight:700;color:#0f2b3b;letter-spacing:1px;white-space:nowrap;-webkit-text-stroke:0.4px #0f2b3b;">Other</div>
<div style="position:absolute;left:926px;top:115px;width:10px;height:10px;background:#c2b79b;"></div>
<div style="position:absolute;left:946.5px;top:115.03px;font-size:10px;line-height:10px;font-weight:700;color:#0f2b3b;letter-spacing:1px;white-space:nowrap;-webkit-text-stroke:0.4px #0f2b3b;">Queueing</div>
<div style="position:absolute;left:926px;top:133px;width:10px;height:10px;background:#9f9371;"></div>
<div style="position:absolute;left:946.5px;top:133.03px;font-size:10px;line-height:10px;font-weight:700;color:#0f2b3b;letter-spacing:1px;white-space:nowrap;-webkit-text-stroke:0.4px #0f2b3b;">Network</div>
<div style="position:absolute;left:926px;top:151px;width:10px;height:10px;background:#717354;"></div>
<div style="position:absolute;left:946.5px;top:151.03px;font-size:10px;line-height:10px;font-weight:700;color:#0f2b3b;letter-spacing:1px;white-space:nowrap;-webkit-text-stroke:0.4px #0f2b3b;">Administrative</div>
<div style="position:absolute;left:926px;top:169px;width:10px;height:10px;background:#5c440b;"></div>
<div style="position:absolute;left:946.5px;top:169.03px;font-size:10px;line-height:10px;font-weight:700;color:#0f2b3b;letter-spacing:1px;white-space:nowrap;-webkit-text-stroke:0.4px #0f2b3b;">Configuration</div>
<div style="position:absolute;left:926px;top:187px;width:10px;height:10px;background:#e46800;"></div>
<div style="position:absolute;left:946.5px;top:187.03px;font-size:10px;line-height:10px;font-weight:700;color:#0f2b3b;letter-spacing:1px;white-space:nowrap;-webkit-text-stroke:0.4px #0f2b3b;">Commit</div>
<div style="position:absolute;left:926px;top:205px;width:10px;height:10px;background:#c02800;"></div>
<div style="position:absolute;left:946.5px;top:205.03px;font-size:10px;line-height:10px;font-weight:700;color:#0f2b3b;letter-spacing:1px;white-space:nowrap;-webkit-text-stroke:0.4px #0f2b3b;">Application</div>
<div style="position:absolute;left:926px;top:223px;width:10px;height:10px;background:#8b1a00;"></div>
<div style="position:absolute;left:946.5px;top:223.03px;font-size:10px;line-height:10px;font-weight:700;color:#0f2b3b;letter-spacing:1px;white-space:nowrap;-webkit-text-stroke:0.4px #0f2b3b;">Concurrency</div>
<div style="position:absolute;left:926px;top:241px;width:10px;height:10px;background:#0094e7;"></div>
<div style="position:absolute;left:946.5px;top:241.03px;font-size:10px;line-height:10px;font-weight:700;color:#0f2b3b;letter-spacing:1px;white-space:nowrap;-webkit-text-stroke:0.4px #0f2b3b;">System I/O</div>
<div style="position:absolute;left:926px;top:259px;width:10px;height:10px;background:#004ae7;"></div>
<div style="position:absolute;left:946.5px;top:259.04px;font-size:10px;line-height:10px;font-weight:700;color:#0f2b3b;letter-spacing:1px;white-space:nowrap;-webkit-text-stroke:0.4px #0f2b3b;">User I/O</div>
<div style="position:absolute;left:926px;top:277px;width:10px;height:10px;background:#ccffcc;"></div>
<div style="position:absolute;left:946.5px;top:277.04px;font-size:10px;line-height:10px;font-weight:700;color:#0f2b3b;letter-spacing:1px;white-space:nowrap;-webkit-text-stroke:0.4px #0f2b3b;">Scheduler</div>
<div style="position:absolute;left:926px;top:295px;width:10px;height:10px;background:#00cc00;"></div>
<div style="position:absolute;left:946.5px;top:295.04px;font-size:10px;line-height:10px;font-weight:700;color:#0f2b3b;letter-spacing:1px;white-space:nowrap;-webkit-text-stroke:0.4px #0f2b3b;">CPU + CPU Wait</div>
<div style="position:absolute;left:27px;top:322.30px;font-size:15px;line-height:15px;font-weight:700;color:#336699;white-space:nowrap;-webkit-text-stroke:0;">Detail for Selected 5 Minute Interval</div>
<div style="position:absolute;left:27px;top:339px;width:1121px;height:1px;background:#d2d9b1;"></div>
<div style="position:absolute;left:35.5px;top:344.00px;font-size:13px;line-height:13px;font-weight:400;color:#000;white-space:nowrap;">Start Time</div>
<div style="position:absolute;left:104px;top:344.00px;font-size:13px;line-height:13px;font-weight:700;color:#000;white-space:nowrap;">Sep 9, 2009 10:00:33 PM EDT</div>
<div style="position:absolute;left:1039px;top:342px;width:105px;height:15px;border:1px solid #8d8c6a;border-right:2px solid #6f6e4c;border-bottom:2px solid #5f5e3c;border-radius:6px;background:linear-gradient(#ffffff,#f4f4ec 70%,#e6e5d8)"></div>
<div style="position:absolute;left:1047.5px;top:344.59px;font-size:12.3px;line-height:12.3px;font-weight:400;color:#000;white-space:nowrap;">Run ASH Report</div>
<div style="position:absolute;left:47px;top:368.18px;font-size:11.6px;line-height:11.6px;font-weight:700;color:#336699;white-space:nowrap;">Top SQL</div>
<div style="position:absolute;left:47px;top:382px;width:410px;height:1px;background:#d2d9b1;"></div>
<div style="position:absolute;left:47px;top:386px;width:408px;height:333px;border:1px solid #d2d9b1"></div>
<div style="position:absolute;left:59.5px;top:395.00px;font-size:13px;line-height:13px;font-weight:400;color:#000;white-space:nowrap;">Actions</div>
<div style="position:absolute;left:105px;top:388px;width:197px;height:20px;border:1px solid #7f9db9;background:#f6f7ef"></div>
<div style="position:absolute;left:287px;top:390px;width:15px;height:18px;border-radius:2px;background:linear-gradient(135deg,#d0dcf9 0%,#b7c9f6 60%,#aec4f6 100%)"></div>
<svg style="position:absolute;left:289.5px;top:395.0px" width="10" height="8" viewBox="0 0 10 8"><path d="M1 1.8 L5 5.8 L9 1.8" fill="none" stroke="#4d6185" stroke-width="2.4"/></svg>
<div style="position:absolute;left:110px;top:393.00px;font-size:13px;line-height:13px;font-weight:400;color:#000;white-space:nowrap;">Schedule SQL Tuning Advisor</div>
<div style="position:absolute;left:305px;top:390px;width:28px;height:15px;border:1px solid #8d8c6a;border-right:2px solid #6f6e4c;border-bottom:2px solid #5f5e3c;border-radius:6px;background:linear-gradient(#ffffff,#f4f4ec 70%,#e6e5d8)"></div>
<div style="position:absolute;left:311.5px;top:393.00px;font-size:13px;line-height:13px;font-weight:400;color:#000;white-space:nowrap;">Go</div>
<div style="position:absolute;left:48px;top:411px;width:408px;height:1px;background:#d2d9b1;"></div>
<div style="position:absolute;left:50.5px;top:416.16px;font-size:13.4px;line-height:13.4px;font-weight:400;color:#663300;white-space:nowrap;text-decoration-color:#663300;"><u>Select All</u></div>
<div style="position:absolute;left:111px;top:416px;width:1px;height:15px;background:#000;"></div>
<div style="position:absolute;left:117.5px;top:416.50px;font-size:13px;line-height:13px;font-weight:400;color:#663300;white-space:nowrap;text-decoration-color:#663300;"><u>Select None</u></div>
<div style="position:absolute;left:48px;top:432px;width:42px;height:22px;background:#d4d9b1;"></div>
<div style="position:absolute;left:48.5px;top:437.00px;font-size:13px;line-height:13px;font-weight:700;color:#336699;white-space:nowrap;">Select</div>
<div style="position:absolute;left:90px;top:433px;width:193px;height:21px;background:#d4d9b1;"></div>
<div style="position:absolute;left:90px;top:433px;width:193px;height:1px;background:#ededdd;"></div>
<div style="position:absolute;left:90px;top:433px;width:1px;height:21px;background:#ededdd;"></div>
<div style="position:absolute;left:282px;top:433px;width:1px;height:21px;background:#4a4a3a;"></div>
<div style="position:absolute;left:90px;top:452px;width:193px;height:2px;background:#45453c;"></div>
<div style="position:absolute;left:92.5px;top:437.67px;font-size:12.2px;line-height:12.2px;font-weight:700;color:#336699;white-space:nowrap;">Activity (%)</div>
<svg style="position:absolute;left:163px;top:439px" width="11" height="10" viewBox="0 0 11 10"><path d="M0.8 1 L10.2 1 L5.5 9 Z" fill="none" stroke="#f4f4ea" stroke-width="1.1"/><path d="M0.8 1 L10.2 1 L5.5 9" fill="none" stroke="#9a9a80" stroke-width="0.9"/></svg>
<div style="position:absolute;left:283px;top:433px;width:100px;height:21px;background:#d4d9b1;"></div>
<div style="position:absolute;left:283px;top:433px;width:100px;height:1px;background:#ededdd;"></div>
<div style="position:absolute;left:283px;top:433px;width:1px;height:21px;background:#ededdd;"></div>
<div style="position:absolute;left:382px;top:433px;width:1px;height:21px;background:#4a4a3a;"></div>
<div style="position:absolute;left:283px;top:452px;width:100px;height:2px;background:#45453c;"></div>
<div style="position:absolute;left:285.5px;top:437.42px;font-size:12.5px;line-height:12.5px;font-weight:700;color:#336699;white-space:nowrap;">SQL ID</div>
<div style="position:absolute;left:383px;top:433px;width:73px;height:21px;background:#d4d9b1;"></div>
<div style="position:absolute;left:383px;top:433px;width:73px;height:1px;background:#ededdd;"></div>
<div style="position:absolute;left:383px;top:433px;width:1px;height:21px;background:#ededdd;"></div>
<div style="position:absolute;left:455px;top:433px;width:1px;height:21px;background:#4a4a3a;"></div>
<div style="position:absolute;left:383px;top:452px;width:73px;height:2px;background:#45453c;"></div>
<div style="position:absolute;left:386px;top:437.42px;font-size:12.5px;line-height:12.5px;font-weight:700;color:#336699;white-space:nowrap;">SQL Type</div>
<div style="position:absolute;left:48px;top:476px;width:408px;height:1px;background:#d2d9b1;"></div>
<div style="position:absolute;left:63px;top:459px;width:11px;height:11px;border:1px solid #1c5180;background:linear-gradient(135deg,#dcdcd3 0%,#f0f0ea 50%,#ffffff 100%)"></div>
<div style="position:absolute;left:93px;top:459px;width:76px;height:12px;background:#00cc00;"></div>
<div style="position:absolute;left:169px;top:459px;width:74px;height:12px;background:#ccffcc;"></div>
<div style="position:absolute;left:243px;top:459px;width:1px;height:12px;background:#f06eaa;"></div>
<div style="position:absolute;left:249.5px;top:458.42px;font-size:12.5px;line-height:12.5px;font-weight:400;color:#000;white-space:nowrap;">60.58</div>
<div style="position:absolute;left:285px;top:460.75px;font-size:12.7px;line-height:12.7px;font-weight:400;color:#663300;white-space:nowrap;text-decoration-color:#663300;"><u>31h2wmu3q47u6</u></div>
<div style="position:absolute;left:385.5px;top:460.75px;font-size:12.7px;line-height:12.7px;font-weight:400;color:#000;white-space:nowrap;">SELECT</div>
<div style="position:absolute;left:48px;top:499px;width:408px;height:1px;background:#d2d9b1;"></div>
<div style="position:absolute;left:63px;top:482px;width:11px;height:11px;border:1px solid #1c5180;background:linear-gradient(135deg,#dcdcd3 0%,#f0f0ea 50%,#ffffff 100%)"></div>
<div style="position:absolute;left:93px;top:482px;width:10px;height:12px;background:#00cc00;"></div>
<div style="position:absolute;left:103px;top:482px;width:8px;height:12px;background:#ccffcc;"></div>
<div style="position:absolute;left:116.5px;top:481.42px;font-size:12.5px;line-height:12.5px;font-weight:400;color:#000;white-space:nowrap;">7.29</div>
<div style="position:absolute;left:285px;top:483.75px;font-size:12.7px;line-height:12.7px;font-weight:400;color:#663300;white-space:nowrap;text-decoration-color:#663300;"><u>59php91anvkwc</u></div>
<div style="position:absolute;left:385.5px;top:483.75px;font-size:12.7px;line-height:12.7px;font-weight:400;color:#000;white-space:nowrap;">SELECT</div>
<div style="position:absolute;left:48px;top:522px;width:408px;height:1px;background:#d2d9b1;"></div>
<div style="position:absolute;left:63px;top:505px;width:11px;height:11px;border:1px solid #1c5180;background:linear-gradient(135deg,#dcdcd3 0%,#f0f0ea 50%,#ffffff 100%)"></div>
<div style="position:absolute;left:93px;top:505px;width:5px;height:12px;background:#00cc00;"></div>
<div style="position:absolute;left:98px;top:505px;width:4px;height:12px;background:#ccffcc;"></div>
<div style="position:absolute;left:107.5px;top:504.42px;font-size:12.5px;line-height:12.5px;font-weight:400;color:#000;white-space:nowrap;">3.67</div>
<div style="position:absolute;left:285px;top:506.75px;font-size:12.7px;line-height:12.7px;font-weight:400;color:#663300;white-space:nowrap;text-decoration-color:#663300;"><u>59php91anvkwc</u></div>
<div style="position:absolute;left:385.5px;top:506.75px;font-size:12.7px;line-height:12.7px;font-weight:400;color:#000;white-space:nowrap;">SELECT</div>
<div style="position:absolute;left:48px;top:557px;width:408px;height:1px;background:#d2d9b1;"></div>
<div style="position:absolute;left:63px;top:528px;width:11px;height:11px;border:1px solid #1c5180;background:linear-gradient(135deg,#dcdcd3 0%,#f0f0ea 50%,#ffffff 100%)"></div>
<div style="position:absolute;left:93px;top:530px;width:4px;height:12px;background:#8b1a00;"></div>
<div style="position:absolute;left:97px;top:530px;width:2px;height:12px;background:#00cc00;"></div>
<div style="position:absolute;left:104.5px;top:529.42px;font-size:12.5px;line-height:12.5px;font-weight:400;color:#000;white-space:nowrap;">3.62</div>
<div style="position:absolute;left:285px;top:531.25px;font-size:12.7px;line-height:12.7px;font-weight:400;color:#663300;white-space:nowrap;text-decoration-color:#663300;"><u>b6usrg82hwsa3</u></div>
<div style="position:absolute;left:385.5px;top:526.75px;font-size:12.7px;line-height:12.7px;font-weight:400;color:#000;white-space:nowrap;">CALL</div>
<div style="position:absolute;left:385.5px;top:542.75px;font-size:12.7px;line-height:12.7px;font-weight:400;color:#000;white-space:nowrap;">METHOD</div>
<div style="position:absolute;left:48px;top:580px;width:408px;height:1px;background:#d2d9b1;"></div>
<div style="position:absolute;left:63px;top:563px;width:11px;height:11px;border:1px solid #1c5180;background:linear-gradient(135deg,#dcdcd3 0%,#f0f0ea 50%,#ffffff 100%)"></div>
<div style="position:absolute;left:93px;top:563px;width:4px;height:12px;background:#ccffcc;"></div>
<div style="position:absolute;left:97px;top:563px;width:4px;height:12px;background:#0094e7;"></div>
<div style="position:absolute;left:101px;top:563px;width:1px;height:12px;background:#004ae7;"></div>
<div style="position:absolute;left:102px;top:563px;width:1px;height:12px;background:#00cc00;"></div>
<div style="position:absolute;left:108.5px;top:562.42px;font-size:12.5px;line-height:12.5px;font-weight:400;color:#000;white-space:nowrap;">3.38</div>
<div style="position:absolute;left:285px;top:564.75px;font-size:12.7px;line-height:12.7px;font-weight:400;color:#663300;white-space:nowrap;text-decoration-color:#663300;"><u>424h0nf7bhqzd</u></div>
<div style="position:absolute;left:385.5px;top:564.75px;font-size:12.7px;line-height:12.7px;font-weight:400;color:#000;white-space:nowrap;">SELECT</div>
<div style="position:absolute;left:48px;top:603px;width:408px;height:1px;background:#d2d9b1;"></div>
<div style="position:absolute;left:63px;top:586px;width:11px;height:11px;border:1px solid #1c5180;background:linear-gradient(135deg,#dcdcd3 0%,#f0f0ea 50%,#ffffff 100%)"></div>
<div style="position:absolute;left:93px;top:586px;width:5px;height:12px;background:#ccffcc;"></div>
<div style="position:absolute;left:98px;top:586px;width:3px;height:12px;background:#00cc00;"></div>
<div style="position:absolute;left:106.5px;top:585.42px;font-size:12.5px;line-height:12.5px;font-weight:400;color:#000;white-space:nowrap;">3.32</div>
<div style="position:absolute;left:285px;top:587.75px;font-size:12.7px;line-height:12.7px;font-weight:400;color:#663300;white-space:nowrap;text-decoration-color:#663300;"><u>62yyzw3309d6a</u></div>
<div style="position:absolute;left:385.5px;top:587.75px;font-size:12.7px;line-height:12.7px;font-weight:400;color:#000;white-space:nowrap;">SELECT</div>
<div style="position:absolute;left:48px;top:626px;width:408px;height:1px;background:#d2d9b1;"></div>
<div style="position:absolute;left:63px;top:609px;width:11px;height:11px;border:1px solid #1c5180;background:linear-gradient(135deg,#dcdcd3 0%,#f0f0ea 50%,#ffffff 100%)"></div>
<div style="position:absolute;left:93px;top:609px;width:3px;height:12px;background:#004ae7;"></div>
<div style="position:absolute;left:96px;top:609px;width:1px;height:12px;background:#ccffcc;"></div>
<div style="position:absolute;left:102.5px;top:608.42px;font-size:12.5px;line-height:12.5px;font-weight:400;color:#000;white-space:nowrap;">2.16</div>
<div style="position:absolute;left:285px;top:610.75px;font-size:12.7px;line-height:12.7px;font-weight:400;color:#663300;white-space:nowrap;text-decoration-color:#663300;"><u>8szmwam7fysa3</u></div>
<div style="position:absolute;left:385.5px;top:610.75px;font-size:12.7px;line-height:12.7px;font-weight:400;color:#000;white-space:nowrap;">INSERT</div>
<div style="position:absolute;left:48px;top:649px;width:408px;height:1px;background:#d2d9b1;"></div>
<div style="position:absolute;left:63px;top:632px;width:11px;height:11px;border:1px solid #1c5180;background:linear-gradient(135deg,#dcdcd3 0%,#f0f0ea 50%,#ffffff 100%)"></div>
<div style="position:absolute;left:93px;top:632px;width:2px;height:12px;background:#00cc00;"></div>
<div style="position:absolute;left:100.5px;top:631.42px;font-size:12.5px;line-height:12.5px;font-weight:400;color:#000;white-space:nowrap;">1.34</div>
<div style="position:absolute;left:285px;top:633.75px;font-size:12.7px;line-height:12.7px;font-weight:400;color:#663300;white-space:nowrap;text-decoration-color:#663300;"><u>59php91anvkwc</u></div>
<div style="position:absolute;left:385.5px;top:633.75px;font-size:12.7px;line-height:12.7px;font-weight:400;color:#000;white-space:nowrap;">SELECT</div>
<div style="position:absolute;left:48px;top:672px;width:408px;height:1px;background:#d2d9b1;"></div>
<div style="position:absolute;left:63px;top:655px;width:11px;height:11px;border:1px solid #1c5180;background:linear-gradient(135deg,#dcdcd3 0%,#f0f0ea 50%,#ffffff 100%)"></div>
<div style="position:absolute;left:93px;top:655px;width:1px;height:12px;background:#00cc00;"></div>
<div style="position:absolute;left:100.5px;top:654.42px;font-size:12.5px;line-height:12.5px;font-weight:400;color:#000;white-space:nowrap;">.82</div>
<div style="position:absolute;left:285px;top:656.75px;font-size:12.7px;line-height:12.7px;font-weight:400;color:#663300;white-space:nowrap;text-decoration-color:#663300;"><u>2tr12b1b8uj71</u></div>
<div style="position:absolute;left:385.5px;top:656.75px;font-size:12.7px;line-height:12.7px;font-weight:400;color:#000;white-space:nowrap;">189</div>
<div style="position:absolute;left:48px;top:695px;width:408px;height:1px;background:#d2d9b1;"></div>
<div style="position:absolute;left:63px;top:678px;width:11px;height:11px;border:1px solid #1c5180;background:linear-gradient(135deg,#dcdcd3 0%,#f0f0ea 50%,#ffffff 100%)"></div>
<div style="position:absolute;left:93px;top:678px;width:1px;height:12px;background:#00cc00;"></div>
<div style="position:absolute;left:94px;top:678px;width:1px;height:12px;background:#004ae7;"></div>
<div style="position:absolute;left:101.5px;top:677.42px;font-size:12.5px;line-height:12.5px;font-weight:400;color:#000;white-space:nowrap;">.76</div>
<div style="position:absolute;left:285px;top:679.75px;font-size:12.7px;line-height:12.7px;font-weight:400;color:#663300;white-space:nowrap;text-decoration-color:#663300;"><u>2tr12b1b8uj71</u></div>
<div style="position:absolute;left:385.5px;top:679.75px;font-size:12.7px;line-height:12.7px;font-weight:400;color:#000;white-space:nowrap;">189</div>
<div style="position:absolute;left:90px;top:453px;width:1px;height:242px;background:#d2d9b1;"></div>
<div style="position:absolute;left:283px;top:453px;width:1px;height:242px;background:#d2d9b1;"></div>
<div style="position:absolute;left:383px;top:453px;width:1px;height:242px;background:#d2d9b1;"></div>
<div style="position:absolute;left:59.5px;top:704.00px;font-size:13px;line-height:13px;font-weight:400;color:#000;white-space:nowrap;">Actions</div>
<div style="position:absolute;left:105px;top:697px;width:197px;height:20px;border:1px solid #7f9db9;background:#f6f7ef"></div>
<div style="position:absolute;left:287px;top:699px;width:15px;height:18px;border-radius:2px;background:linear-gradient(135deg,#d0dcf9 0%,#b7c9f6 60%,#aec4f6 100%)"></div>
<svg style="position:absolute;left:289.5px;top:704.0px" width="10" height="8" viewBox="0 0 10 8"><path d="M1 1.8 L5 5.8 L9 1.8" fill="none" stroke="#4d6185" stroke-width="2.4"/></svg>
<div style="position:absolute;left:110px;top:702.00px;font-size:13px;line-height:13px;font-weight:400;color:#000;white-space:nowrap;">Schedule SQL Tuning Advisor</div>
<div style="position:absolute;left:305px;top:699px;width:28px;height:15px;border:1px solid #8d8c6a;border-right:2px solid #6f6e4c;border-bottom:2px solid #5f5e3c;border-radius:6px;background:linear-gradient(#ffffff,#f4f4ec 70%,#e6e5d8)"></div>
<div style="position:absolute;left:311.5px;top:702.00px;font-size:13px;line-height:13px;font-weight:400;color:#000;white-space:nowrap;">Go</div>
<div style="position:absolute;right:699px;top:722.03px;font-size:10.6px;line-height:10.6px;font-weight:400;color:#000;white-space:nowrap;">Total Sample Count: 1,715</div>
<div style="position:absolute;left:477px;top:368.18px;font-size:11.6px;line-height:11.6px;font-weight:700;color:#336699;white-space:nowrap;">Top Sessions</div>
<div style="position:absolute;left:477px;top:382px;width:671px;height:1px;background:#d2d9b1;"></div>
<div style="position:absolute;left:477px;top:389.00px;font-size:13px;line-height:13px;font-weight:400;color:#000;white-space:nowrap;">View</div>
<div style="position:absolute;left:515px;top:385px;width:104px;height:20px;border:1px solid #7f9db9;background:#f6f7ef"></div>
<div style="position:absolute;left:604px;top:387px;width:15px;height:18px;border-radius:2px;background:linear-gradient(135deg,#d0dcf9 0%,#b7c9f6 60%,#aec4f6 100%)"></div>
<svg style="position:absolute;left:606.5px;top:392.0px" width="10" height="8" viewBox="0 0 10 8"><path d="M1 1.8 L5 5.8 L9 1.8" fill="none" stroke="#4d6185" stroke-width="2.4"/></svg>
<div style="position:absolute;left:520px;top:390.00px;font-size:13px;line-height:13px;font-weight:400;color:#000;white-space:nowrap;">Top Sessions</div>
<div style="position:absolute;left:477px;top:408px;width:192px;height:21px;background:#d4d9b1;"></div>
<div style="position:absolute;left:477px;top:408px;width:192px;height:1px;background:#ededdd;"></div>
<div style="position:absolute;left:477px;top:408px;width:1px;height:21px;background:#ededdd;"></div>
<div style="position:absolute;left:668px;top:408px;width:1px;height:21px;background:#4a4a3a;"></div>
<div style="position:absolute;left:477px;top:427px;width:192px;height:2px;background:#45453c;"></div>
<div style="position:absolute;left:480.5px;top:412.67px;font-size:12.2px;line-height:12.2px;font-weight:700;color:#336699;white-space:nowrap;">Activity (%)</div>
<svg style="position:absolute;left:551px;top:414px" width="11" height="10" viewBox="0 0 11 10"><path d="M0.8 1 L10.2 1 L5.5 9 Z" fill="none" stroke="#f4f4ea" stroke-width="1.1"/><path d="M0.8 1 L10.2 1 L5.5 9" fill="none" stroke="#9a9a80" stroke-width="0.9"/></svg>
<div style="position:absolute;left:669px;top:408px;width:70px;height:21px;background:#d4d9b1;"></div>
<div style="position:absolute;left:669px;top:408px;width:70px;height:1px;background:#ededdd;"></div>
<div style="position:absolute;left:669px;top:408px;width:1px;height:21px;background:#ededdd;"></div>
<div style="position:absolute;left:738px;top:408px;width:1px;height:21px;background:#4a4a3a;"></div>
<div style="position:absolute;left:669px;top:427px;width:70px;height:2px;background:#45453c;"></div>
<div style="position:absolute;left:672px;top:412.50px;font-size:12.4px;line-height:12.4px;font-weight:700;color:#336699;white-space:nowrap;">Session ID</div>
<div style="position:absolute;left:739px;top:408px;width:93px;height:21px;background:#d4d9b1;"></div>
<div style="position:absolute;left:739px;top:408px;width:93px;height:1px;background:#ededdd;"></div>
<div style="position:absolute;left:739px;top:408px;width:1px;height:21px;background:#ededdd;"></div>
<div style="position:absolute;left:831px;top:408px;width:1px;height:21px;background:#4a4a3a;"></div>
<div style="position:absolute;left:739px;top:427px;width:93px;height:2px;background:#45453c;"></div>
<div style="position:absolute;left:741.5px;top:412.50px;font-size:12.4px;line-height:12.4px;font-weight:700;color:#336699;white-space:nowrap;">QC Session ID</div>
<div style="position:absolute;left:832px;top:408px;width:73px;height:21px;background:#d4d9b1;"></div>
<div style="position:absolute;left:832px;top:408px;width:73px;height:1px;background:#ededdd;"></div>
<div style="position:absolute;left:832px;top:408px;width:1px;height:21px;background:#ededdd;"></div>
<div style="position:absolute;left:904px;top:408px;width:1px;height:21px;background:#4a4a3a;"></div>
<div style="position:absolute;left:832px;top:427px;width:73px;height:2px;background:#45453c;"></div>
<div style="position:absolute;left:835px;top:412.50px;font-size:12.4px;line-height:12.4px;font-weight:700;color:#336699;white-space:nowrap;">User Name</div>
<div style="position:absolute;left:905px;top:408px;width:243px;height:21px;background:#d4d9b1;"></div>
<div style="position:absolute;left:905px;top:408px;width:243px;height:1px;background:#ededdd;"></div>
<div style="position:absolute;left:905px;top:408px;width:1px;height:21px;background:#ededdd;"></div>
<div style="position:absolute;left:1147px;top:408px;width:1px;height:21px;background:#4a4a3a;"></div>
<div style="position:absolute;left:905px;top:427px;width:243px;height:2px;background:#45453c;"></div>
<div style="position:absolute;left:907.5px;top:412.50px;font-size:12.4px;line-height:12.4px;font-weight:700;color:#336699;white-space:nowrap;">Program</div>
<div style="position:absolute;left:480px;top:433px;width:80px;height:12px;background:#00cc00;"></div>
<div style="position:absolute;left:560px;top:433px;width:70px;height:12px;background:#ccffcc;"></div>
<div style="position:absolute;right:487px;top:432.00px;font-size:13px;line-height:13px;font-weight:400;color:#000;white-space:nowrap;">16.45</div>
<div style="position:absolute;left:671px;top:432.00px;font-size:13px;line-height:13px;font-weight:400;color:#663300;white-space:nowrap;text-decoration-color:#663300;"><u>33</u></div>
<div style="position:absolute;left:741px;top:432.00px;font-size:13px;line-height:13px;font-weight:400;color:#663300;white-space:nowrap;text-decoration-color:#663300;"><u>31</u></div>
<div style="position:absolute;left:835px;top:432.00px;font-size:13px;line-height:13px;font-weight:400;color:#663300;white-space:nowrap;text-decoration-color:#663300;"><u>SH</u></div>
<div style="position:absolute;left:907.5px;top:432.12px;font-size:12.85px;line-height:12.85px;font-weight:400;color:#000;white-space:nowrap;">oracle@racnode2.example.com (P003)</div>
<div style="position:absolute;left:477px;top:450px;width:671px;height:1px;background:#d2d9b1;"></div>
<div style="position:absolute;left:480px;top:455px;width:73px;height:12px;background:#ccffcc;"></div>
<div style="position:absolute;left:553px;top:455px;width:62px;height:12px;background:#00cc00;"></div>
<div style="position:absolute;left:615px;top:455px;width:13px;height:12px;background:#0094e7;"></div>
<div style="position:absolute;left:628px;top:455px;width:2px;height:12px;background:#004ae7;"></div>
<div style="position:absolute;right:487px;top:454.00px;font-size:13px;line-height:13px;font-weight:400;color:#000;white-space:nowrap;">16.45</div>
<div style="position:absolute;left:671px;top:454.00px;font-size:13px;line-height:13px;font-weight:400;color:#663300;white-space:nowrap;text-decoration-color:#663300;"><u>20</u></div>
<div style="position:absolute;left:835px;top:454.00px;font-size:13px;line-height:13px;font-weight:400;color:#663300;white-space:nowrap;text-decoration-color:#663300;"><u>SYS</u></div>
<div style="position:absolute;left:907.5px;top:454.12px;font-size:12.85px;line-height:12.85px;font-weight:400;color:#000;white-space:nowrap;">oracle@racnode2.example.com (J001)</div>
<div style="position:absolute;left:477px;top:472px;width:671px;height:1px;background:#d2d9b1;"></div>
<div style="position:absolute;left:480px;top:477px;width:70px;height:12px;background:#ccffcc;"></div>
<div style="position:absolute;left:550px;top:477px;width:39px;height:12px;background:#00cc00;"></div>
<div style="position:absolute;left:589px;top:477px;width:28px;height:12px;background:#8b1a00;"></div>
<div style="position:absolute;left:617px;top:477px;width:12px;height:12px;background:#004ae7;"></div>
<div style="position:absolute;left:629px;top:477px;width:1px;height:12px;background:#f06eaa;"></div>
<div style="position:absolute;right:487px;top:476.00px;font-size:13px;line-height:13px;font-weight:400;color:#000;white-space:nowrap;">16.39</div>
<div style="position:absolute;left:671px;top:476.00px;font-size:13px;line-height:13px;font-weight:400;color:#663300;white-space:nowrap;text-decoration-color:#663300;"><u>36</u></div>
<div style="position:absolute;left:835px;top:476.00px;font-size:13px;line-height:13px;font-weight:400;color:#663300;white-space:nowrap;text-decoration-color:#663300;"><u>SYS</u></div>
<div style="position:absolute;left:907.5px;top:476.12px;font-size:12.85px;line-height:12.85px;font-weight:400;color:#000;white-space:nowrap;">oracle@racnode2.example.com (J000)</div>
<div style="position:absolute;left:477px;top:494px;width:671px;height:1px;background:#d2d9b1;"></div>
<div style="position:absolute;left:480px;top:499px;width:72px;height:12px;background:#00cc00;"></div>
<div style="position:absolute;left:552px;top:499px;width:70px;height:12px;background:#ccffcc;"></div>
<div style="position:absolute;left:627px;top:498.00px;font-size:13px;line-height:13px;font-weight:400;color:#000;white-space:nowrap;">15.56</div>
<div style="position:absolute;left:671px;top:498.00px;font-size:13px;line-height:13px;font-weight:400;color:#663300;white-space:nowrap;text-decoration-color:#663300;"><u>154</u></div>
<div style="position:absolute;left:741px;top:498.00px;font-size:13px;line-height:13px;font-weight:400;color:#663300;white-space:nowrap;text-decoration-color:#663300;"><u>31</u></div>
<div style="position:absolute;left:835px;top:498.00px;font-size:13px;line-height:13px;font-weight:400;color:#663300;white-space:nowrap;text-decoration-color:#663300;"><u>SH</u></div>
<div style="position:absolute;left:907.5px;top:498.12px;font-size:12.85px;line-height:12.85px;font-weight:400;color:#000;white-space:nowrap;">oracle@racnode2.example.com (P000)</div>
<div style="position:absolute;left:477px;top:516px;width:671px;height:1px;background:#d2d9b1;"></div>
<div style="position:absolute;left:480px;top:521px;width:62px;height:12px;background:#ccffcc;"></div>
<div style="position:absolute;left:542px;top:521px;width:56px;height:12px;background:#00cc00;"></div>
<div style="position:absolute;left:603px;top:520.00px;font-size:13px;line-height:13px;font-weight:400;color:#000;white-space:nowrap;">12.91</div>
<div style="position:absolute;left:671px;top:520.00px;font-size:13px;line-height:13px;font-weight:400;color:#663300;white-space:nowrap;text-decoration-color:#663300;"><u>157</u></div>
<div style="position:absolute;left:741px;top:520.00px;font-size:13px;line-height:13px;font-weight:400;color:#663300;white-space:nowrap;text-decoration-color:#663300;"><u>31</u></div>
<div style="position:absolute;left:835px;top:520.00px;font-size:13px;line-height:13px;font-weight:400;color:#663300;white-space:nowrap;text-decoration-color:#663300;"><u>SH</u></div>
<div style="position:absolute;left:907.5px;top:520.12px;font-size:12.85px;line-height:12.85px;font-weight:400;color:#000;white-space:nowrap;">oracle@racnode2.example.com (P002)</div>
<div style="position:absolute;left:477px;top:538px;width:671px;height:1px;background:#d2d9b1;"></div>
<div style="position:absolute;left:480px;top:543px;width:56px;height:12px;background:#00cc00;"></div>
<div style="position:absolute;left:536px;top:543px;width:49px;height:12px;background:#ccffcc;"></div>
<div style="position:absolute;left:590px;top:542.00px;font-size:13px;line-height:13px;font-weight:400;color:#000;white-space:nowrap;">11.59</div>
<div style="position:absolute;left:671px;top:542.00px;font-size:13px;line-height:13px;font-weight:400;color:#663300;white-space:nowrap;text-decoration-color:#663300;"><u>30</u></div>
<div style="position:absolute;left:741px;top:542.00px;font-size:13px;line-height:13px;font-weight:400;color:#663300;white-space:nowrap;text-decoration-color:#663300;"><u>31</u></div>
<div style="position:absolute;left:835px;top:542.00px;font-size:13px;line-height:13px;font-weight:400;color:#663300;white-space:nowrap;text-decoration-color:#663300;"><u>SH</u></div>
<div style="position:absolute;left:907.5px;top:542.12px;font-size:12.85px;line-height:12.85px;font-weight:400;color:#000;white-space:nowrap;">oracle@racnode2.example.com (P001)</div>
<div style="position:absolute;left:477px;top:560px;width:671px;height:1px;background:#d2d9b1;"></div>
<div style="position:absolute;left:480px;top:565px;width:17px;height:12px;background:#ccffcc;"></div>
<div style="position:absolute;left:497px;top:565px;width:11px;height:12px;background:#004ae7;"></div>
<div style="position:absolute;left:508px;top:565px;width:3px;height:12px;background:#00cc00;"></div>
<div style="position:absolute;left:516px;top:564.00px;font-size:13px;line-height:13px;font-weight:400;color:#000;white-space:nowrap;">3.59</div>
<div style="position:absolute;left:671px;top:564.00px;font-size:13px;line-height:13px;font-weight:400;color:#663300;white-space:nowrap;text-decoration-color:#663300;"><u>26</u></div>
<div style="position:absolute;left:835px;top:564.00px;font-size:13px;line-height:13px;font-weight:400;color:#663300;white-space:nowrap;text-decoration-color:#663300;"><u>SYS</u></div>
<div style="position:absolute;left:907.5px;top:564.12px;font-size:12.85px;line-height:12.85px;font-weight:400;color:#000;white-space:nowrap;">oracle@racnode2.example.com (J002)</div>
<div style="position:absolute;left:477px;top:582px;width:671px;height:1px;background:#d2d9b1;"></div>
<div style="position:absolute;left:480px;top:587px;width:9px;height:12px;background:#8b1a00;"></div>
<div style="position:absolute;left:489px;top:587px;width:1px;height:12px;background:#00cc00;"></div>
<div style="position:absolute;left:495px;top:586.00px;font-size:13px;line-height:13px;font-weight:400;color:#000;white-space:nowrap;">.99</div>
<div style="position:absolute;left:671px;top:586.00px;font-size:13px;line-height:13px;font-weight:400;color:#663300;white-space:nowrap;text-decoration-color:#663300;"><u>22</u></div>
<div style="position:absolute;left:835px;top:586.00px;font-size:13px;line-height:13px;font-weight:400;color:#663300;white-space:nowrap;text-decoration-color:#663300;"><u>SYS</u></div>
<div style="position:absolute;left:907.5px;top:586.12px;font-size:12.85px;line-height:12.85px;font-weight:400;color:#000;white-space:nowrap;">oracle@racnode2.example.com (CJQ0)</div>
<div style="position:absolute;left:477px;top:604px;width:671px;height:1px;background:#d2d9b1;"></div>
<div style="position:absolute;left:480px;top:609px;width:8px;height:12px;background:#0094e7;"></div>
<div style="position:absolute;left:488px;top:609px;width:1px;height:12px;background:#00cc00;"></div>
<div style="position:absolute;left:494px;top:608.00px;font-size:13px;line-height:13px;font-weight:400;color:#000;white-space:nowrap;">.94</div>
<div style="position:absolute;left:671px;top:608.00px;font-size:13px;line-height:13px;font-weight:400;color:#663300;white-space:nowrap;text-decoration-color:#663300;"><u>133</u></div>
<div style="position:absolute;left:835px;top:608.00px;font-size:13px;line-height:13px;font-weight:400;color:#663300;white-space:nowrap;text-decoration-color:#663300;"><u>SYS</u></div>
<div style="position:absolute;left:907.5px;top:608.12px;font-size:12.85px;line-height:12.85px;font-weight:400;color:#000;white-space:nowrap;">oracle@racnode2.example.com (LGWR)</div>
<div style="position:absolute;left:477px;top:626px;width:671px;height:1px;background:#d2d9b1;"></div>
<div style="position:absolute;left:480px;top:631px;width:7px;height:12px;background:#c02800;"></div>
<div style="position:absolute;left:487px;top:631px;width:1px;height:12px;background:#ccffcc;"></div>
<div style="position:absolute;left:488px;top:631px;width:1px;height:12px;background:#00cc00;"></div>
<div style="position:absolute;left:494px;top:630.00px;font-size:13px;line-height:13px;font-weight:400;color:#000;white-space:nowrap;">.88</div>
<div style="position:absolute;left:671px;top:630.00px;font-size:13px;line-height:13px;font-weight:400;color:#663300;white-space:nowrap;text-decoration-color:#663300;"><u>142</u></div>
<div style="position:absolute;left:835px;top:630.00px;font-size:13px;line-height:13px;font-weight:400;color:#663300;white-space:nowrap;text-decoration-color:#663300;"><u>SYS</u></div>
<div style="position:absolute;left:907.5px;top:630.12px;font-size:12.85px;line-height:12.85px;font-weight:400;color:#000;white-space:nowrap;">oraagent.bin@racnode2.example.com</div>
<div style="position:absolute;left:907.5px;top:646.12px;font-size:12.85px;line-height:12.85px;font-weight:400;color:#000;white-space:nowrap;">(TNS V1-V3)</div>
<div style="position:absolute;left:477px;top:661px;width:671px;height:1px;background:#d2d9b1;"></div>
<div style="position:absolute;left:477px;top:428px;width:1px;height:234px;background:#d2d9b1;"></div>
<div style="position:absolute;left:669px;top:428px;width:1px;height:234px;background:#d2d9b1;"></div>
<div style="position:absolute;left:739px;top:428px;width:1px;height:234px;background:#d2d9b1;"></div>
<div style="position:absolute;left:832px;top:428px;width:1px;height:234px;background:#d2d9b1;"></div>
<div style="position:absolute;left:905px;top:428px;width:1px;height:234px;background:#d2d9b1;"></div>
<div style="position:absolute;left:1147px;top:428px;width:1px;height:234px;background:#d2d9b1;"></div>
<div style="position:absolute;right:7px;top:664.53px;font-size:10.6px;line-height:10.6px;font-weight:400;color:#000;white-space:nowrap;">Total Sample Count: 1,812</div>
</div>
</body></html>
